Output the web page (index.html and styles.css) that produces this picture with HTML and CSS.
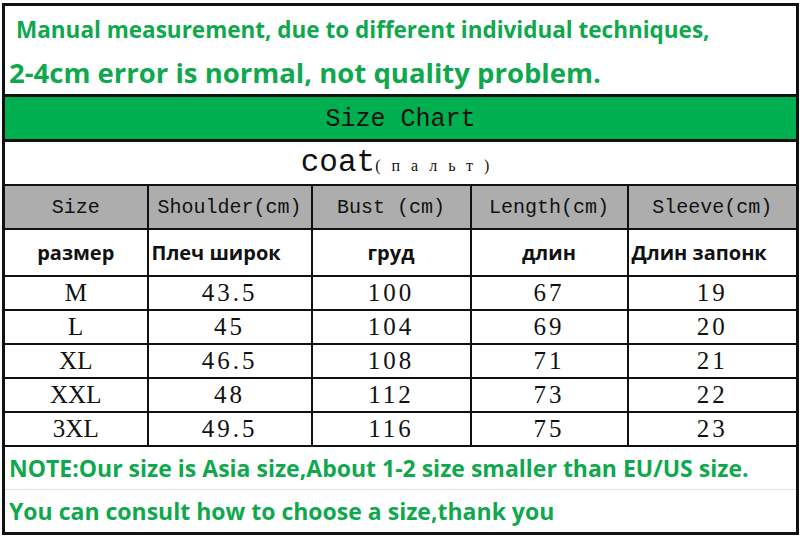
FILE: index.html
```html
<!DOCTYPE html>
<html lang="en">
<head>
  <meta charset="UTF-8" />
  <title>Size Chart - coat</title>
  <link rel="stylesheet" href="styles.css">
</head>
<body>
  <table class="chart">
    <colgroup>
      <col class="c1"><col class="c2"><col class="c3"><col class="c4"><col class="c5">
    </colgroup>
    <tr class="notice first">
      <td colspan="5">Manual measurement, due to different individual techniques,</td>
    </tr>
    <tr class="notice second">
      <td colspan="5">2-4cm error is normal, not quality problem.</td>
    </tr>
    <tr class="title">
      <td colspan="5">Size Chart</td>
    </tr>
    <tr class="product">
      <td colspan="5">coat<span class="ru">(пальт)</span></td>
    </tr>
    <tr class="head">
      <td>Size</td>
      <td>Shoulder(cm)</td>
      <td>Bust (cm)</td>
      <td>Length(cm)</td>
      <td>Sleeve(cm)</td>
    </tr>
    <tr class="head-ru">
      <td>размер</td>
      <td class="left">Плеч широк</td>
      <td>груд</td>
      <td>длин</td>
      <td class="left">Длин запонк</td>
    </tr>
    <tr class="row"><td class="sz">M</td><td>43.5</td><td>100</td><td>67</td><td>19</td></tr>
    <tr class="row"><td class="sz">L</td><td>45</td><td>104</td><td>69</td><td>20</td></tr>
    <tr class="row"><td class="sz">XL</td><td>46.5</td><td>108</td><td>71</td><td>21</td></tr>
    <tr class="row"><td class="sz">XXL</td><td>48</td><td>112</td><td>73</td><td>22</td></tr>
    <tr class="row"><td class="sz">3XL</td><td>49.5</td><td>116</td><td>75</td><td>23</td></tr>
    <tr class="note top">
      <td colspan="5">NOTE:Our size is Asia size,About 1-2 size smaller than EU/US size.</td>
    </tr>
    <tr class="note bottom">
      <td colspan="5">You can consult how to choose a size,thank you</td>
    </tr>
  </table>
</body>
</html>
```

FILE: styles.css
```css
* {
  margin: 0;
  padding: 0;
  box-sizing: border-box;
}
body {
  background: #fff;
  color: #111;
  padding: 3px 0 0 2px;
}
.chart {
  border-collapse: collapse;
  width: 794px;
  border: 3px solid #111;
  table-layout: fixed;
}
.c1 { width: 144px; }
.c2 { width: 164px; }
.c3 { width: 159px; }
.c4 { width: 157px; }
.c5 { width: 170px; }
td {
  border: 2px solid #111;
  text-align: center;
  vertical-align: middle;
  padding: 0;
  white-space: nowrap;
}
.notice td, .note td {
  text-align: left;
  color: #10a84e;
  font-family: "Open Sans", "Noto Sans", sans-serif;
  font-weight: 700;
}
.notice.first td {
  height: 46px;
  border-bottom: none;
  padding-left: 11px;
  padding-top: 2px;
  font-size: 22.5px;
}
.notice.second td {
  height: 45px;
  border-top: none;
  padding-left: 4px;
  font-size: 27.5px;
}
.title td {
  height: 45px;
  background: #00b050;
  border: 3px solid #111;
  font-family: "Liberation Mono", monospace;
  font-size: 25px;
  padding-top: 2px;
}
.product td {
  height: 44px;
  font-family: "Liberation Mono", monospace;
  font-size: 31px;
}
.product .ru {
  font-size: 16px;
  letter-spacing: 11px;
  font-family: "Liberation Serif", serif;
}
.head td {
  height: 44px;
  background: #adadad;
  font-family: "Liberation Mono", monospace;
  font-size: 20px;
  padding-top: 2px;
}
.head-ru td {
  height: 47px;
  font-family: "Open Sans", "Noto Sans", sans-serif;
  font-weight: 700;
  font-size: 20px;
}
.head-ru td.left {
  text-align: left;
  padding-left: 3px;
}
.row td {
  height: 34px;
  font-family: "Liberation Serif", serif;
  font-size: 25px;
  letter-spacing: 3px;
  line-height: 1;
}
.row td.sz {
  letter-spacing: 0;
}
.note td {
  height: 44px;
  font-size: 23px;
  padding-left: 4px;
}
.note.top td {
  border-bottom: 1px solid #e2e2e2;
}
.note.bottom td {
  border-top: none;
  border-bottom: 3px solid #111;
}
```
